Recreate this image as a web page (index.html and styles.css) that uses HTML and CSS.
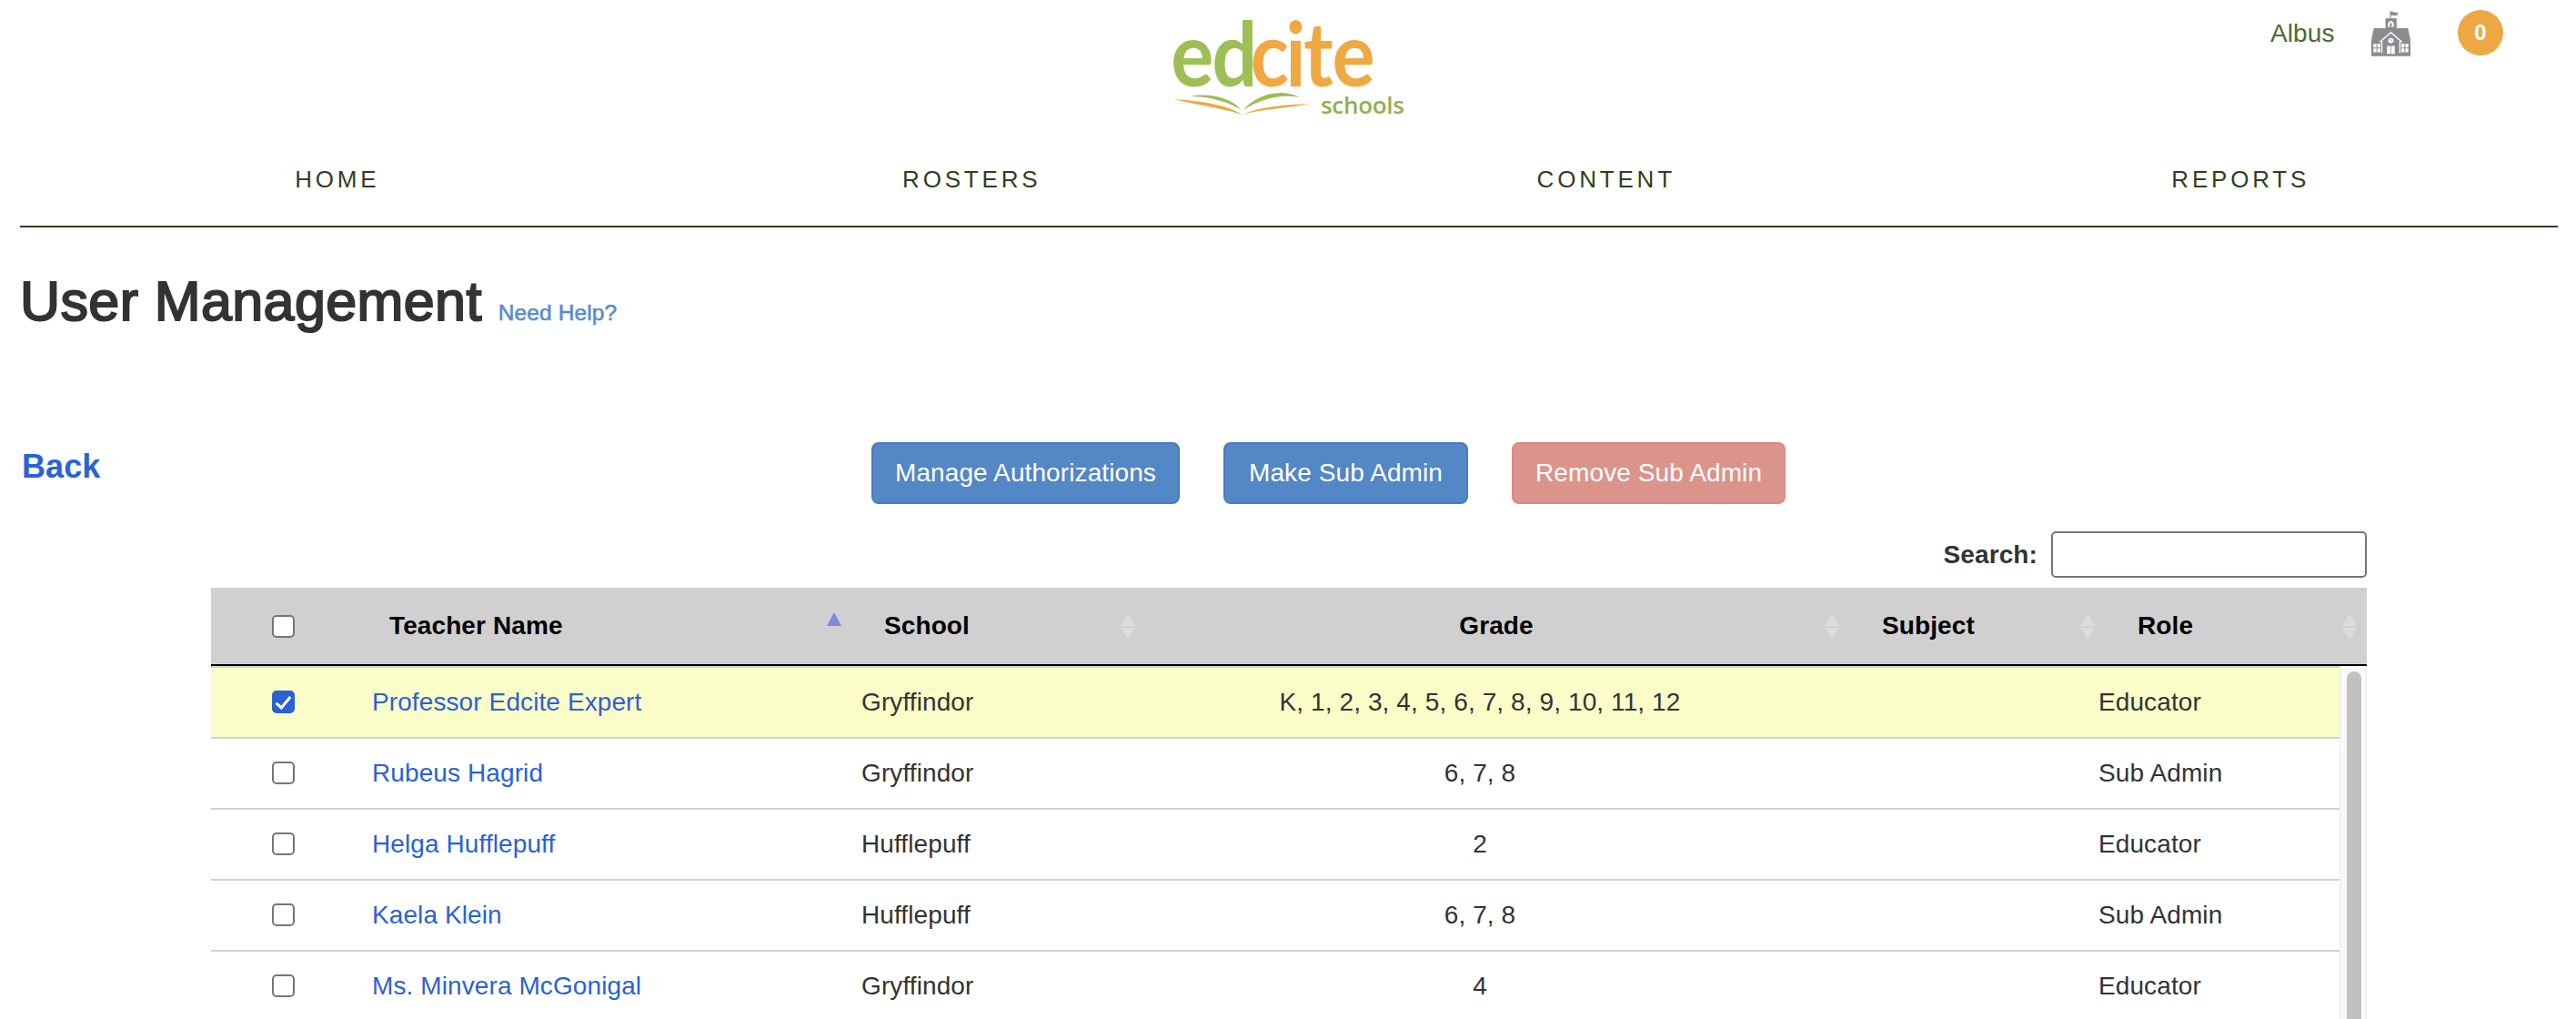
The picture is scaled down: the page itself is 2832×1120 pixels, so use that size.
FILE: index.html
```html
<!DOCTYPE html>
<html lang="en">
<head>
<meta charset="utf-8">
<title>User Management</title>
<link rel="stylesheet" href="styles.css">
</head>
<body>
<header class="site-header">
  <div class="topbar">
    <svg class="logo" viewBox="0 0 254 100" width="254" height="100">
      <text class="logo-word" y="68" x="-3 47 94 137 159 194" transform="scale(0.9 1)"><tspan class="logo-green">ed</tspan><tspan class="logo-orange">cite</tspan></text>
      <text class="logo-sub" x="162" y="98">schools</text>
      <path class="fill-green" d="M19,79 C38,75 62,79 75,94 C60,85 40,79 19,79Z"/>
      <path class="fill-green" d="M77,94 C88,80 115,68 139,80 C118,76 95,82 77,94Z"/>
      <path class="fill-orange" d="M0,82 C30,84 60,88 75,99 C55,92 25,88 0,82Z"/>
      <path class="fill-orange" d="M76,99 C95,90 125,88 150,87 C125,92 95,93 76,99Z"/>
    </svg>
    <div class="user-area">
      <span class="user-name">Albus</span>
      <svg class="school-icon" viewBox="0 0 130 150" width="43" height="50">
        <path class="icon-fill" d="M62,0h3v2l28,4l-9,4l5,5l-24,-1v12h-3z"/>
        <path class="icon-fill" d="M47,24h37v34h-37z"/>
        <path class="icon-white" d="M55,52v-8c0,-6 5,-10 10,-12c5,2 10,6 10,12v8z"/>
        <path class="icon-fill" d="M60,50l5,-14l5,14z"/>
        <path class="icon-fill" d="M8,57h114l8,40v53h-130v-53z"/>
        <path class="icon-line" d="M28,103l37,-32l37,32M35,100v40M95,100v40"/>
        <circle class="icon-white" cx="65" cy="98" r="9"/>
        <path class="icon-clock" d="M65,92v6l4,2"/>
        <path class="icon-white" d="M7,108h10v13h-10zM20,108h10v13h-10zM7,124h10v13h-10zM20,124h10v13h-10zM100,108h10v13h-10zM113,108h10v13h-10zM100,124h10v13h-10zM113,124h10v13h-10z"/>
        <path class="icon-white" d="M52,116h12v26h-12zM66,116h12v26h-12z"/>
      </svg>
      <span class="badge">0</span>
    </div>
  </div>
  <nav class="main-nav">
    <a class="nav-item">HOME</a>
    <a class="nav-item">ROSTERS</a>
    <a class="nav-item">CONTENT</a>
    <a class="nav-item">REPORTS</a>
  </nav>
</header>
<main class="content">
  <div class="page-title">
    <h1 class="title">User Management</h1>
    <a class="help">Need Help?</a>
  </div>
  <div class="toolbar">
    <a class="back">Back</a>
    <div class="actions">
      <button class="btn btn-primary">Manage Authorizations</button>
      <button class="btn btn-primary btn-roomy">Make Sub Admin</button>
      <button class="btn btn-danger">Remove Sub Admin</button>
    </div>
  </div>
  <section class="table-wrap">
    <div class="search">
      <label class="search-label" for="q">Search:</label>
      <input class="search-input" id="q" type="text">
    </div>
    <div class="thead">
      <div class="th th-check"><input class="check" type="checkbox"></div>
      <div class="th">Teacher Name<span class="sort sort-active"></span></div>
      <div class="th th-pad">School<span class="sort"></span></div>
      <div class="th th-center">Grade<span class="sort"></span></div>
      <div class="th th-pad">Subject<span class="sort"></span></div>
      <div class="th th-pad">Role<span class="sort"></span></div>
    </div>
    <div class="tbody">
      <div class="rows">
        <div class="row row-selected">
          <div class="cell cell-check"><input class="check" type="checkbox" checked></div>
          <div class="cell"><a class="link">Professor Edcite Expert</a></div>
          <div class="cell">Gryffindor</div>
          <div class="cell cell-center">K, 1, 2, 3, 4, 5, 6, 7, 8, 9, 10, 11, 12</div>
          <div class="cell"></div>
          <div class="cell">Educator</div>
        </div>
        <div class="row">
          <div class="cell cell-check"><input class="check" type="checkbox"></div>
          <div class="cell"><a class="link">Rubeus Hagrid</a></div>
          <div class="cell">Gryffindor</div>
          <div class="cell cell-center">6, 7, 8</div>
          <div class="cell"></div>
          <div class="cell">Sub Admin</div>
        </div>
        <div class="row">
          <div class="cell cell-check"><input class="check" type="checkbox"></div>
          <div class="cell"><a class="link">Helga Hufflepuff</a></div>
          <div class="cell">Hufflepuff</div>
          <div class="cell cell-center">2</div>
          <div class="cell"></div>
          <div class="cell">Educator</div>
        </div>
        <div class="row">
          <div class="cell cell-check"><input class="check" type="checkbox"></div>
          <div class="cell"><a class="link">Kaela Klein</a></div>
          <div class="cell">Hufflepuff</div>
          <div class="cell cell-center">6, 7, 8</div>
          <div class="cell"></div>
          <div class="cell">Sub Admin</div>
        </div>
        <div class="row">
          <div class="cell cell-check"><input class="check" type="checkbox"></div>
          <div class="cell"><a class="link">Ms. Minvera McGonigal</a></div>
          <div class="cell">Gryffindor</div>
          <div class="cell cell-center">4</div>
          <div class="cell"></div>
          <div class="cell">Educator</div>
        </div>
      </div>
      <div class="scrolltrack"><div class="scrollthumb"></div></div>
    </div>
  </section>
</main>
</body>
</html>
```

FILE: styles.css
```css
* { box-sizing: border-box; }
html, body {
  margin: 0;
  height: 1120px;
  overflow: hidden;
  background: #fff;
  font-family: "Liberation Sans", Arial, sans-serif;
  color: #333;
  letter-spacing: 0.1px;
}
.site-header { padding: 0 20px 0 22px; }
.topbar {
  height: 160px;
  display: flex;
  justify-content: center;
  position: relative;
}
.logo { margin-top: 27px; overflow: visible; }
.logo-word { font-family: Lato, sans-serif; font-weight: 700; font-size: 98px; letter-spacing: 0; }
.logo-green { fill: #9dbf55; }
.logo-orange { fill: #efa843; }
.logo-sub { font-family: "Open Sans", sans-serif; font-weight: 600; font-size: 26px; letter-spacing: -0.3px; fill: #8db255; }
.fill-green { fill: #9dbf55; }
.fill-orange { fill: #efa843; }
.user-area {
  position: absolute;
  top: 10px;
  left: 2473px;
  display: flex;
  align-items: center;
}
.user-name { font-size: 28px; color: #4a6b2f; width: 112px; margin-top: 2px; padding-left: 1px; }
.school-icon { margin-top: 2px; }
.icon-fill { fill: #8a8b8e; }
.icon-white { fill: #fff; }
.icon-line { fill: none; stroke: #fff; stroke-width: 4; }
.icon-clock { fill: none; stroke: #8a8b8e; stroke-width: 2; }
.badge {
  width: 50px;
  height: 50px;
  margin-left: 52px;
  border-radius: 50%;
  background: #eda743;
  color: #fff;
  font-weight: 700;
  font-size: 24px;
  display: flex;
  align-items: center;
  justify-content: center;
}
.main-nav {
  display: flex;
  height: 90px;
  border-bottom: 2px solid #2f3f1c;
}
.nav-item {
  flex: 1;
  text-align: center;
  font-size: 26px;
  letter-spacing: 3.8px;
  line-height: 74px;
  color: #2f3f1c;
}
.content { padding: 0 0 0 22px; }
.page-title {
  margin-top: 46px;
  display: flex;
  align-items: baseline;
  gap: 18px;
  height: 190px;
}
.title {
  margin: 0;
  font-size: 61px;
  line-height: 70px;
  font-weight: 400;
  letter-spacing: 0.4px;
  -webkit-text-stroke: 2px #333;
  color: #333;
}
.help {
  font-size: 24.5px;
  color: #5b8ccc;
  -webkit-text-stroke: 0.6px #5b8ccc;
}
.toolbar { display: flex; height: 98px; }
.back {
  width: 936px;
  padding-left: 2px;
  font-size: 36px;
  font-weight: 700;
  line-height: 41px;
  margin-top: 6px;
  color: #2a62d6;
}
.actions { display: flex; gap: 48px; }
.btn {
  height: 68px;
  padding: 0 24px;
  border-radius: 8px;
  font-family: inherit;
  font-size: 28px;
  letter-spacing: 0.1px;
  color: #fff;
  border: 2px solid;
}
.btn-roomy { padding: 0 26px; }
.btn-primary { background: #5387c6; border-color: #4a7cbc; }
.btn-danger { background: #db948c; border-color: #d88a82; }
.table-wrap { margin-left: 210px; width: 2370px; }
.search {
  display: flex;
  justify-content: flex-end;
  align-items: center;
  gap: 15px;
  height: 62px;
  padding-bottom: 11px;
}
.search-label { font-size: 28px; font-weight: 700; }
.search-input {
  width: 347px;
  height: 51px;
  border: 2px solid #767676;
  border-radius: 5px;
  background: #fff;
}
.thead {
  display: grid;
  grid-template-columns: 158px 542px 323px 774px 281px 288px;
  height: 86px;
  background: #d0d0d0;
  border-bottom: 2px solid #000;
  padding-right: 4px;
  font-size: 28px;
  font-weight: 700;
  color: #000;
}
.th {
  position: relative;
  display: flex;
  align-items: center;
  padding-left: 38px;
}
.th-check { justify-content: center; padding-left: 0; padding-right: 0; }
.th-pad { padding-left: 40px; }
.th-center { justify-content: center; padding-left: 6px; }
.check {
  appearance: none;
  -webkit-appearance: none;
  position: relative;
  display: block;
  width: 25px;
  height: 25px;
  margin: 0;
  border: 2px solid #767676;
  border-radius: 5px;
  background: #fff;
}
.check:checked { background: #2a62d6; border-color: #2a62d6; }
.check:checked::after {
  content: "";
  position: absolute;
  left: 6px;
  top: 1px;
  width: 6px;
  height: 14px;
  border: solid #fff;
  border-width: 0 3px 3px 0;
  transform: rotate(40deg);
}
.sort {
  position: absolute;
  right: 7px;
  top: 29px;
  width: 16px;
  height: 28px;
}
.sort::before, .sort::after {
  content: "";
  position: absolute;
  left: 0;
  border-left: 8px solid transparent;
  border-right: 8px solid transparent;
}
.sort::before { top: 0; border-bottom: 13px solid #dcdcdc; }
.sort::after { bottom: 0; border-top: 13px solid #dcdcdc; }
.sort-active::before { top: -2px; border-bottom: 15px solid #8088dc; }
.sort-active::after { display: none; }
.tbody {
  display: flex;
  height: 388px;
  overflow: hidden;
}
.rows { width: 2340px; border-top: 2px solid #d0d0d0; }
.row {
  display: grid;
  grid-template-columns: 158px 538px 312px 774px 274px 284px;
  height: 78px;
  border-bottom: 2px solid #d0d0d0;
  font-size: 28px;
  color: #333;
}
.row-selected { background: #fbfdc9; }
.cell { display: flex; align-items: center; padding-left: 19px; }
.cell-check { justify-content: center; padding-left: 0; padding-bottom: 2px; }
.cell-center { justify-content: center; padding-left: 0; }
.link { color: #2a62d6; }
.scrolltrack {
  width: 30px;
  background: #fafafa;
  border-left: 2px solid #f0f0f0;
  border-right: 2px solid #f0f0f0;
  padding: 6px 0 0 6px;
}
.scrollthumb {
  width: 16px;
  height: 600px;
  background: #c1c1c1;
  border-radius: 8px;
}
```
